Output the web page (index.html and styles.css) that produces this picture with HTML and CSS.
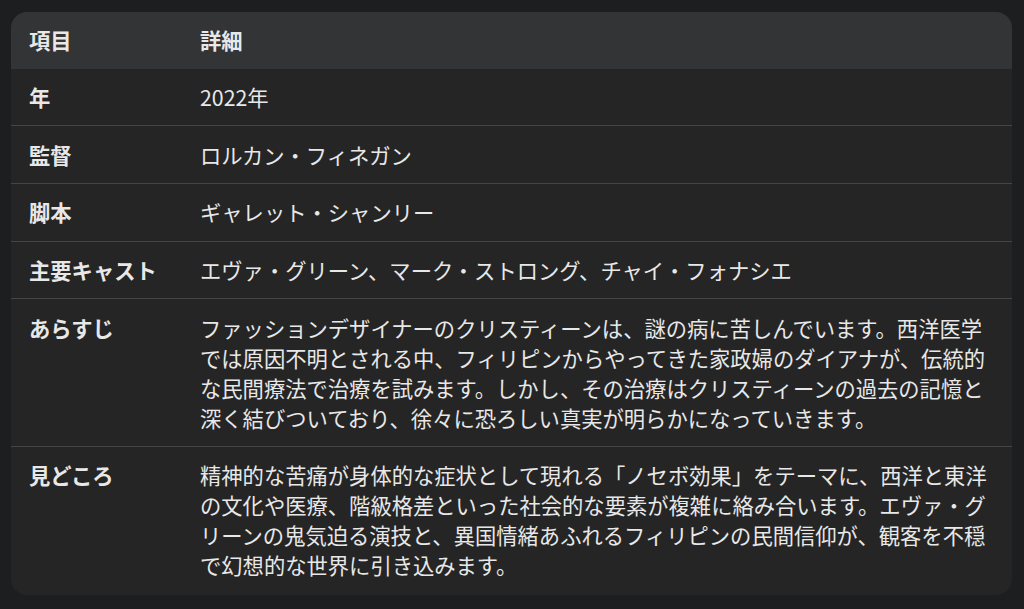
FILE: index.html
```html
<!DOCTYPE html>
<html lang="ja">
<head>
<meta charset="utf-8">
<link rel="stylesheet" href="styles.css">
</head>
<body>
<div class="card">
<table class="info">
<thead>
<tr><th class="label">項目</th><th>詳細</th></tr>
</thead>
<tbody>
<tr><td class="label">年</td><td>2022年</td></tr>
<tr><td class="label">監督</td><td>ロルカン・フィネガン</td></tr>
<tr><td class="label">脚本</td><td>ギャレット・シャンリー</td></tr>
<tr><td class="label">主要キャスト</td><td>エヴァ・グリーン、マーク・ストロング、チャイ・フォナシエ</td></tr>
<tr><td class="label">あらすじ</td><td>ファッションデザイナーのクリスティーンは、謎の病に苦しんでいます。西洋医学では原因不明とされる中、フィリピンからやってきた家政婦のダイアナが、伝統的な民間療法で治療を試みます。しかし、その治療はクリスティーンの過去の記憶と深く結びついており、徐々に恐ろしい真実が明らかになっていきます。</td></tr>
<tr><td class="label">見どころ</td><td>精神的な苦痛が身体的な症状として現れる「ノセボ効果」をテーマに、西洋と東洋の文化や医療、階級格差といった社会的な要素が複雑に絡み合います。エヴァ・グリーンの鬼気迫る演技と、異国情緒あふれるフィリピンの民間信仰が、観客を不穏で幻想的な世界に引き込みます。</td></tr>
</tbody>
</table>
</div>
</body>
</html>
```
FILE: styles.css
```css
html, body {
  margin: 0;
  padding: 0;
  background: #1d1e20;
}
body {
  padding: 12px 12px 14px 11px;
  font-family: "Noto Sans CJK JP", "Noto Sans", sans-serif;
  color: #e8e8e8;
}
.card {
  background: #252525;
  border-radius: 16px;
  overflow: hidden;
}
.info {
  width: 100%;
  border-collapse: collapse;
  font-size: 21.3px;
  line-height: 29.9px;
}
.info th, .info td {
  text-align: left;
  vertical-align: top;
  padding: 13.4px 18px 13.4px 18px;
}
.info th {
  background: #333436;
  font-weight: 700;
}
.info tbody tr + tr td {
  border-top: 1px solid #454545;
}
.info tbody tr:last-child td {
  padding-bottom: 15px;
}
.info .label {
  width: 135px;
  font-weight: 700;
  white-space: nowrap;
}
.info td {
  font-weight: 400;
}
.info td.label {
  font-weight: 700;
}
```
